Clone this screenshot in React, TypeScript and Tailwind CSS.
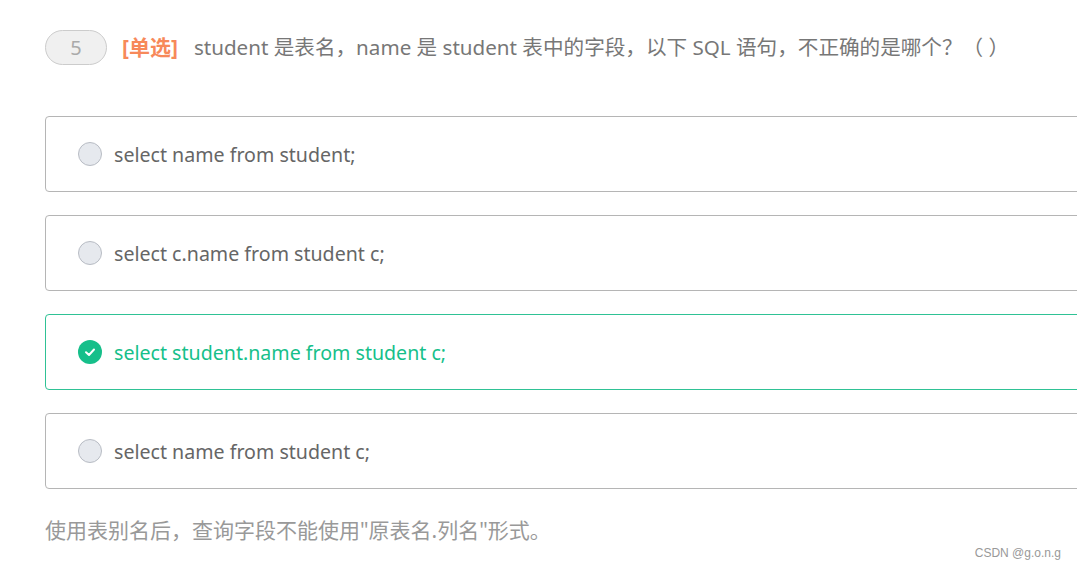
const OPCIONES = [
  "select name from student;",
  "select c.name from student c;",
  "select student.name from student c;",
  "select name from student c;",
];

const ELEGIDA = 2;

export default function App() {
  return (
    <div className="relative w-[1077px] h-[572px] overflow-hidden bg-white pl-[45px] pt-[30px] text-[#666] font-['Noto_Sans','Noto_Sans_CJK_SC',sans-serif]">
      <div className="flex items-center h-[35px]">
        <span className="flex items-center justify-center w-[62px] h-[35px] rounded-full border border-[#ccc] bg-[#f0f0f0] text-[20px] text-[#aaa]">
          5
        </span>
        <span className="ml-[15px] text-[21px] font-bold text-[#f7895a]">[单选]</span>
        <span className="ml-[16px] text-[20.6px] text-[#777]">
          student 是表名，name 是 student 表中的字段，以下 SQL 语句，不正确的是哪个？（ ）
        </span>
      </div>

      <div className="mt-[51px] flex flex-col gap-[23px] w-[1100px]">
        {OPCIONES.map((o, i) => {
          const sel = i === ELEGIDA;
          return (
            <div
              key={o}
              className={
                "flex items-center h-[76px] rounded-[4px] border pl-[32px] " +
                (sel ? "border-[#2fc295]" : "border-[#b5b5b5]")
              }
            >
              {sel ? (
                <span className="flex items-center justify-center w-[24px] h-[24px] rounded-full bg-[#16bf8a]">
                  <svg width="14" height="14" viewBox="0 0 14 14" fill="none">
                    <path d="M3 7.2 L6 10 L11 4.5" stroke="white" strokeWidth="2" strokeLinecap="round" strokeLinejoin="round" />
                  </svg>
                </span>
              ) : (
                <span className="w-[24px] h-[24px] rounded-full border border-[#b8bcc4] bg-[#e6e9ee]" />
              )}
              <span className={"ml-[12px] pt-[2px] text-[19.6px] " + (sel ? "text-[#16bf8a]" : "text-[#666]")}>{o}</span>
            </div>
          );
        })}
      </div>

      <p className="mt-[26px] text-[21px] text-[#999]">使用表别名后，查询字段不能使用"原表名.列名"形式。</p>

      <span className="absolute right-[16px] bottom-[10px] text-[12px] text-[#999] font-['Liberation_Sans',sans-serif]">
        CSDN @g.o.n.g
      </span>
    </div>
  );
}
